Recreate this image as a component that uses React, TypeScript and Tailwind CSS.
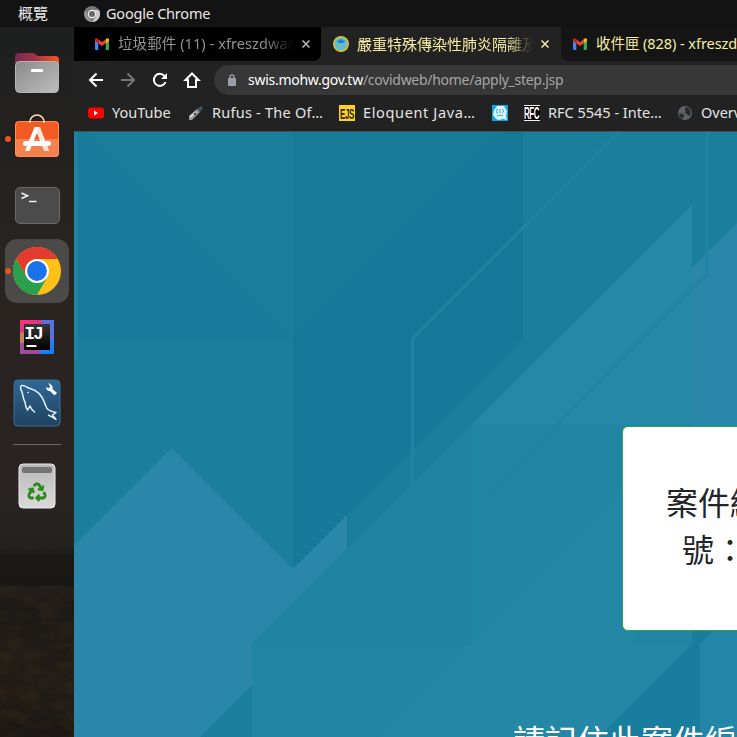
import type { ReactNode } from "react";
import { FaRecycle } from "react-icons/fa";

const UI = "font-['Noto_Sans','Noto_Sans_CJK_TC',sans-serif]";

function Gmail() {
  return (
    <svg className="h-4 w-4 shrink-0" viewBox="0 0 16 16">
      <path d="M1 4.2 4.3 6.6V14H2a1 1 0 0 1-1-1Z" fill="#4285f4" />
      <path d="M11.7 6.6 15 4.2V13a1 1 0 0 1-1 1h-2.3Z" fill="#34a853" />
      <path d="M4.3 3.3 8 6.2l3.7-2.9v4L8 10.1 4.3 7.3Z" fill="#ea4335" />
      <path d="M11.7 3.3 13 2.5c1-.6 2 0 2 1.2v1.2l-3.3 2.5Z" fill="#fbbc04" />
      <path d="M4.3 3.3 3 2.5C2 1.9 1 2.5 1 3.7v1.2l3.3 2.5Z" fill="#c5221f" />
    </svg>
  );
}

function CloseIcon() {
  return (
    <svg className="h-2 w-2 shrink-0" viewBox="0 0 8 8" stroke="currentColor" strokeWidth="1.5">
      <path d="m.5.5 7 7m0-7-7 7" />
    </svg>
  );
}

function ChromeGrey() {
  return (
    <svg className="h-4 w-4 shrink-0" viewBox="0 0 16 16">
      <circle cx="8" cy="8" r="8" fill="#777" />
      <path d="M8 4h7A8 8 0 0 1 8 16l4-6Z" fill="#c9c9c9" />
      <path d="M1.3 4 5 10l3 6A8 8 0 0 1 1.3 4Z" fill="#929292" />
      <circle cx="8" cy="8" r="4.2" fill="#eee" />
      <circle cx="8" cy="8" r="3" fill="#686868" />
    </svg>
  );
}

function Emblem() {
  return (
    <svg className="h-4 w-4 shrink-0" viewBox="0 0 16 16">
      <circle cx="8" cy="8" r="7.2" fill="#55bdea" stroke="#e0c222" strokeWidth="1.6" />
      <path d="M4.5 4.500 6.500 6 8 4l1.500 2 2-1.500M8 3v4" stroke="#2878b8" strokeWidth="1.500" fill="none" />
      <path d="M4 8.500q2 0 4 1.500 2-1.500 4-1.500l-1 3-3 1.500-3-1.500Z" fill="#62bfc0" stroke="#a3b978" strokeWidth=".6" />
    </svg>
  );
}

function Dock() {
  return (
    <aside className="relative h-[710px] w-[74px] shrink-0 overflow-hidden bg-[#222120]">
      <svg className="absolute inset-0" width="74" height="710" viewBox="0 27 74 710">
        <defs>
          <linearGradient id="sky" x1="0" y1="0" x2="0" y2="1">
            <stop offset="0" stopColor="#1e1f20" />
            <stop offset=".45" stopColor="#292420" />
            <stop offset=".88" stopColor="#292423" />
            <stop offset="1" stopColor="#232121" />
          </linearGradient>
          <linearGradient id="field" x1="0" y1="0" x2="0" y2="1">
            <stop offset="0" stopColor="#1b1918" />
            <stop offset=".16" stopColor="#191817" />
            <stop offset=".19" stopColor="#231e19" />
            <stop offset=".3" stopColor="#1c1a17" />
            <stop offset=".75" stopColor="#221c16" />
            <stop offset="1" stopColor="#1a1714" />
          </linearGradient>
          <filter id="grass" x="0" y="0" width="100%" height="100%" colorInterpolationFilters="sRGB">
            <feTurbulence type="fractalNoise" baseFrequency=".05 .08" numOctaves="3" seed="4" />
            <feColorMatrix values="0 0 0 0 .3  0 0 0 0 .22  0 0 0 0 .13  1.8 0 0 0 -.72" />
          </filter>
        </defs>
        <rect y="27" width="74" height="528" fill="url(#sky)" />
        <path d="M0 550q17-5 30 0l8-1 3-4 4 1 5 4q12-3 24-1v8H0Z" fill="#1e1e1e" />
        <rect y="554" width="74" height="183" fill="url(#field)" />
        <rect y="586" width="74" height="151" filter="url(#grass)" opacity=".36" />
      </svg>
      <div className="relative flex flex-col">
        <div className="flex h-20 items-end justify-center">
          <Files />
        </div>
        <div className="relative mt-1 flex h-12 items-center justify-center">
          <Dot />
          <Software />
        </div>
        <div className="mt-7 flex h-[37px] justify-center">
          <div className="h-[37px] w-[45px] rounded-[5px] border border-[#696969] bg-[#4b4b4b]">
            <svg width="43" height="35" viewBox="0 0 43 35" fill="none" stroke="#eee" strokeWidth="1.6">
              <path d="m5.5 5 6 2.700-6 2.800M13 13.500h7.500" />
            </svg>
          </div>
        </div>
        <div className="relative mx-[5px] mt-[15px] flex h-16 items-center justify-center rounded-xl bg-[#4c4949]">
          <span className="absolute left-0 top-[29px] h-1.5 w-1.5 rounded-full bg-[#e95420]" />
          <Chrome />
        </div>
        <div className="mt-4 flex h-9 justify-center">
          <IntelliJ />
        </div>
        <div className="mt-6 flex h-12 justify-center">
          <Workbench />
        </div>
        <div className="mx-[13px] mt-[17px] h-px bg-[#696664]" />
        <div className="mt-[18px] flex justify-center">
          <Trash />
        </div>
      </div>
    </aside>
  );
}

function Dot() {
  return <span className="absolute left-[5px] top-[25px] h-1.5 w-1.5 rounded-full bg-[#e95420]" />;
}

function Files() {
  return (
    <svg className="mb-[13px]" width="46" height="42" viewBox="14 52 46 42">
      <defs>
        <linearGradient id="folder"><stop stopColor="#792850" /><stop offset=".45" stopColor="#a33348" /><stop offset="1" stopColor="#f15b22" /></linearGradient>
        <linearGradient id="silver" x1="0" y1="0" x2="1" y2="1"><stop stopColor="#8a8a8a" /><stop offset="1" stopColor="#bdbdbd" /></linearGradient>
      </defs>
      <path d="M15 66V57q0-4 4-4h14q2 0 3 2l2 1h17q4 0 4 4v14H15Z" fill="url(#folder)" />
      <rect x="15.5" y="61.5" width="43" height="31" rx="4" fill="url(#silver)" stroke="#b5b5b5" />
      <rect x="31" y="69" width="12" height="3" rx="1" fill="#fff" />
    </svg>
  );
}

function Software() {
  return (
    <svg className="relative top-px" width="46" height="46" viewBox="14 113 46 46">
      <rect x="15" y="121" width="44" height="36" rx="4" fill="#f15b23" />
      <path d="M15 139h44v14q0 4-4 4H19q-4 0-4-4Z" fill="#f4824f" />
      <rect x="15.5" y="121.5" width="43" height="35" rx="4" fill="none" stroke="#fb905f" />
      <path d="M30 123v-1a7 7 0 0 1 14 0v1" stroke="#ffe1b3" strokeWidth="1.6" fill="none" />
      <path d="m34.500 127-9.500 24h4.500l7.500-18 7.500 18H49l-9.500-24Z" fill="#fff" />
      <path d="m37 132 2-5h1l9 24h-4.500Z" fill="#ffe4d7" />
      <rect x="23" y="141" width="28" height="5" rx="2.5" fill="#fff" />
    </svg>
  );
}

function Chrome() {
  return (
    <svg width="48" height="48" viewBox="0 0 48 48">
      <circle cx="24" cy="24" r="24" fill="#fbc116" />
      <path d="M3.2 12A24 24 0 0 1 44.8 12H24L13.6 30Z" fill="#e33b2e" />
      <path d="M3.2 12A24 24 0 0 0 24 48l10.4-18L24 24l-10.4 6Z" fill="#2b9f4b" />
      <circle cx="24" cy="24" r="12" fill="#fff" />
      <circle cx="24" cy="24" r="9.9" fill="#1a73e8" />
    </svg>
  );
}

function IntelliJ() {
  return (
    <svg width="34" height="36" viewBox="0 0 34 36">
      <defs>
        <linearGradient id="ij" x1="0" y1="0" x2="1" y2="1"><stop stopColor="#ff3274" /><stop offset=".42" stopColor="#c93a88" /><stop offset=".65" stopColor="#397fe8" /><stop offset="1" stopColor="#087cff" /></linearGradient>
        <linearGradient id="ijblack" x1="0" y1="0" x2="0" y2="1"><stop stopColor="#363636" /><stop offset="1" stopColor="#000" /></linearGradient>
      </defs>
      <path d="M0 1h34v34H0Z" fill="url(#ij)" />
      <path d="M0 14 4 13v18l-4 4Z" fill="#c48550" />
      <path d="M0 24h4v7h16v4H0Z" fill="#a34ba0" />
      <path d="M21 1h13v22l-4-2V5h-7Z" fill="#5a72df" />
      <rect x="4" y="5" width="26" height="26" fill="url(#ijblack)" />
      <text x="4.5" y="20" fill="white" fontFamily="Liberation Mono" fontSize="17.5" fontWeight="bold" letterSpacing="-1.8">IJ</text>
      <path d="M6.5 26h10v2h-10Z" fill="#fff" />
    </svg>
  );
}

function Workbench() {
  return (
    <svg width="48" height="48" viewBox="13 379 48 48" fill="none">
      <defs><linearGradient id="mysql" x1="0" y1="0" x2="0" y2="1"><stop stopColor="#306897" /><stop offset="1" stopColor="#20415f" /></linearGradient></defs>
      <rect x="14" y="380" width="46" height="46" rx="4" fill="url(#mysql)" stroke="#397098" />
      <path d="M35 412.5c-3-2-4-4-5-6.5l-2.5 4c-2-2-2-5-2.5-8-2-3-2-7-3-10-2-4-2-6 0-6.5 3-.5 5 2.5 8 3 8 2 12 7 14.5 14 1 3 1.5 5 3.5 7 3 2 5 2.5 8 3l-3.5 2.5 3.5 4.5c-3-2-5-3.5-8-4.5" stroke="#e9f3fa" strokeWidth="1.5" strokeLinejoin="round" />
      <circle cx="28" cy="392.5" r=".8" fill="#fff" />
      <path d="m48 383 2 3-1 2.500-3-1.500q0 4 4 4l4 4q2 0 3-2l-4.500-4q1-4-4.500-6Z" fill="#fff" />
    </svg>
  );
}

function Trash() {
  return (
    <svg width="38" height="47" viewBox="18 463 38 47">
      <defs><linearGradient id="bin" x1="0" x2="0" y1="0" y2="1"><stop stopColor="#b8b8b8" /><stop offset="1" stopColor="#dadada" /></linearGradient></defs>
      <rect x="19" y="464" width="36" height="44" rx="4" fill="url(#bin)" stroke="#ececec" />
      <rect x="22" y="467" width="30" height="6" rx="2" fill="#747474" />
      <FaRecycle x={27.5} y={482.5} size={19} color="#278b19" stroke="#278b19" strokeWidth={16} />
    </svg>
  );
}

function Tabs() {
  return (
    <div className="flex h-[34px] bg-[#222] text-[14.5px]">
      <div className="flex w-[247px] shrink-0 items-center rounded-br-lg bg-black pl-5 text-[#949493]">
        <Gmail />
        <span className="ml-2 w-[176px] shrink-0 overflow-hidden whitespace-nowrap text-[14.5px] tracking-[0.08px] [mask-image:linear-gradient(to_right,black_82%,transparent)]">垃圾郵件 (11) - xfreszdwa@gmail</span>
        <span className="ml-2 text-[#b9b9b9]"><CloseIcon /></span>
      </div>
      <div className="relative flex w-60 shrink-0 items-center rounded-t-lg bg-[#222] pl-3 text-[#f6eda4]">
        <Emblem />
        <span className="ml-2 w-[176px] shrink-0 overflow-hidden whitespace-nowrap text-[15px] [mask-image:linear-gradient(to_right,black_84%,transparent)]">嚴重特殊傳染性肺炎隔離及檢疫</span>
        <span className="ml-2"><CloseIcon /></span>
      </div>
      <div className="flex min-w-0 flex-1 items-center rounded-bl-lg bg-[#151515] pl-[11px] text-[#f6eda4]">
        <Gmail />
        <span className="ml-2 whitespace-nowrap tracking-[-0.06px]">收件匣 (828) - xfreszdwa</span>
      </div>
    </div>
  );
}

function Toolbar() {
  return (
    <div className="flex h-[37px] items-center pl-[14px] text-white">
      <svg width="114" height="18" viewBox="88 71 114 18" fill="none" stroke="currentColor" strokeWidth="2">
        <path d="M103 80H90m6.5-6.5L90 80l6.5 6.5" />
        <path d="M121 80h13m-6.5-6.5L134 80l-6.5 6.5" stroke="#777" />
        <path d="M164.5 76a6 6 0 1 0 1 6" />
        <path d="M167 73v6h-6Z" fill="currentColor" stroke="none" />
        <path d="m185.500 80 6.500-6.500 6.500 6.500H196v7h-8v-7Z" />
      </svg>
      <div className="ml-3 flex h-[30px] flex-1 items-center rounded-l-full bg-[#373737] pl-[14px]">
        <svg className="h-3 w-2" viewBox="0 0 8 12">
          <path d="M2 5V3a2 2 0 0 1 4 0v2" fill="none" stroke="#9aa0a6" strokeWidth="1.5" />
          <rect y="4" width="8" height="8" rx="1" fill="#9aa0a6" />
        </svg>
        <span className="ml-3 whitespace-nowrap text-[14px] tracking-[-0.28px] text-[#a6a6a6]"><span className="text-white">swis.mohw.gov.tw</span>/covidweb/home/apply_step.jsp</span>
      </div>
    </div>
  );
}

function Bookmark({ icon, children, width }: { icon: ReactNode; children?: ReactNode; width: string }) {
  return (
    <div className={`flex shrink-0 items-center gap-2 whitespace-nowrap ${width}`}>
      {icon}
      {children && <span>{children}</span>}
    </div>
  );
}

function Bookmarks() {
  return (
    <div className="flex h-[33px] items-center overflow-hidden pb-[3px] pl-[14px] text-[14.5px] text-[#e4e4e4]">
      <Bookmark width="w-[100px]" icon={
        <svg width="16" height="16" viewBox="0 0 16 16"><rect y="2.5" width="16" height="11" rx="3" fill="#f00" /><path d="m6 5.5 4 2.5-4 2.5Z" fill="#fff" /></svg>
      }>YouTube</Bookmark>
      <Bookmark width="w-[151px] tracking-[0.24px]" icon={
        <svg width="16" height="16" viewBox="0 0 16 16"><path d="m1 11 8-7 3 3-8 8H1Z" fill="#969c9c" /><path d="m9 4 4-3 2 2-3 4Z" fill="#48545e" /><path d="m2 12 6-5" stroke="#d7dddd" strokeWidth="2" /><circle cx="7" cy="9" r="1.3" fill="#444" /></svg>
      }>Rufus - The Of…</Bookmark>
      <Bookmark width="w-[153px] tracking-[0.64px]" icon={
        <svg width="16" height="16" viewBox="0 0 16 16"><path d="M0 0h16v16H0Z" fill="#ffd21b" /><text transform="translate(1 13.5) scale(.51 1)" fill="#2a281b" fontFamily="Liberation Sans" fontSize="15.5" fontWeight="bold" letterSpacing="-.6">EJS</text></svg>
      }>Eloquent Java…</Bookmark>
      <Bookmark width="w-8" icon={
        <svg width="16" height="16" viewBox="0 0 16 16"><path d="M0 0h16v16H0Z" fill="#10a4e3" /><path d="M5 1h7l3 5-1 5 1 4-4-1-4 1-3-1-3-4 1-5Z" fill="#d9f5ff" /><path d="m4 4 2 1-2 2 2 1m2-4v4m2-4 2 2-2 2m-5 3 3-1 3 1" stroke="#37acd9" fill="none" /></svg>
      } />
      <Bookmark width="w-[153px]" icon={
        <svg width="16" height="16" viewBox="0 0 16 16"><path d="M0 0h16v16H0Z" fill="#000" /><path d="M0 0h16v1H0ZM0 15h16v1H0Z" fill="#eee" /><text transform="translate(0 14) scale(.47 1)" fill="#fff" fontFamily="Liberation Sans" fontSize="17" fontWeight="bold" letterSpacing="-.9">RFC</text></svg>
      }>RFC 5545 - Inte…</Bookmark>
      <Bookmark width="w-[120px]" icon={
        <svg width="16" height="16" viewBox="0 0 16 16"><circle cx="8" cy="8" r="7" fill="#5f6368" /><path d="M2 8.5h3.5l2 2-1.5 2V14Q2 12.5 2 8.5ZM9 2 7.5 4.5 9 6 7.500 7.500l2 1 1.500 2h2.500Q15 3.500 9 2Z" fill="#292a2b" /></svg>
      }>Overview</Bookmark>
    </div>
  );
}

function Backdrop() {
  return (
    <svg className="absolute inset-0" width="663" height="605" viewBox="74 132 663 605">
      <path d="M74 131h663v606H74Z" fill="#1a7e9d" />
      <path d="M86 131 293 338.5H77.5V131Z" fill="#187b9b" />
      <path d="M74 131h3.5v227l-2 3H74Z" fill="#1e84a3" />
      <path d="M293 131h230v208L293 569Z" fill="#177999" />
      <path d="M500 131h23v207.5H293Z" fill="#167898" />
      <path d="M293 131h207L293 338Z" fill="#187a99" />
      <path d="M74 545 171.5 448 293 569l54-54v35l-95 95v40l-52 52H74Z" fill="#2a87a9" />
      <path d="M692 268 737 223v204h-45Z" fill="#2b87a9" />
      <path d="M692 205v439l-93 93H252v-93Z" fill="#2083a2" />
      <path d="M692 205v219H473Z" fill="#2488a7" />
      <path d="M472 424h220v220H472Z" fill="#2185a4" />
      <path d="M634 482v162H472Z" fill="#2286a5" />
      <path d="M252 645h220l-92 92H252Z" fill="#2185a3" />
      <path d="M472 644h220l-93 93H380Z" fill="#2487a6" />
      <path d="M692 631h20l-12 13v93H599l93-93Z" fill="#197d9d" />
      <path d="M712 631h25v106h-37v-93Z" fill="#2386a6" />
      <path d="M620 131 412.5 338.5V486" fill="none" stroke="#1f83a2" strokeWidth="3" />
      <path d="M707 131v143L484 497" fill="none" stroke="#2084a3" strokeWidth="3" />
    </svg>
  );
}

export default function App() {
  return (
    <div className={`h-[737px] w-[737px] overflow-hidden bg-[#222] ${UI}`}>
      <header className="flex h-[27px] items-center bg-[#131313] text-[14.5px] text-[#e8e8e8]">
        <span className="w-[84px] pl-[18px] text-[15px]">概覽</span>
        <ChromeGrey />
        <span className="ml-1.5 tracking-[-0.22px]">Google Chrome</span>
      </header>
      <div className="flex">
        <Dock />
        <div className="min-w-0 flex-1">
          <Tabs />
          <Toolbar />
          <Bookmarks />
          <div className="h-px bg-[#4d4a4a]" />
          <main className="relative h-[605px] overflow-hidden">
            <Backdrop />
            <div className="relative pl-[548px] pt-[294px]">
              <section className="h-[205px] w-[230px] rounded-md border border-[#28a745] bg-white pl-[43px] pt-[52px] text-[32px] leading-[47px] text-[#212529]">
                <p className="whitespace-nowrap">案件編</p>
                <p className="whitespace-nowrap pl-4">號：</p>
              </section>
            </div>
            <p className="relative ml-[439px] mt-[86px] whitespace-nowrap text-[32px] leading-[48px] text-white">請記住此案件編號</p>
          </main>
        </div>
      </div>
    </div>
  );
}
